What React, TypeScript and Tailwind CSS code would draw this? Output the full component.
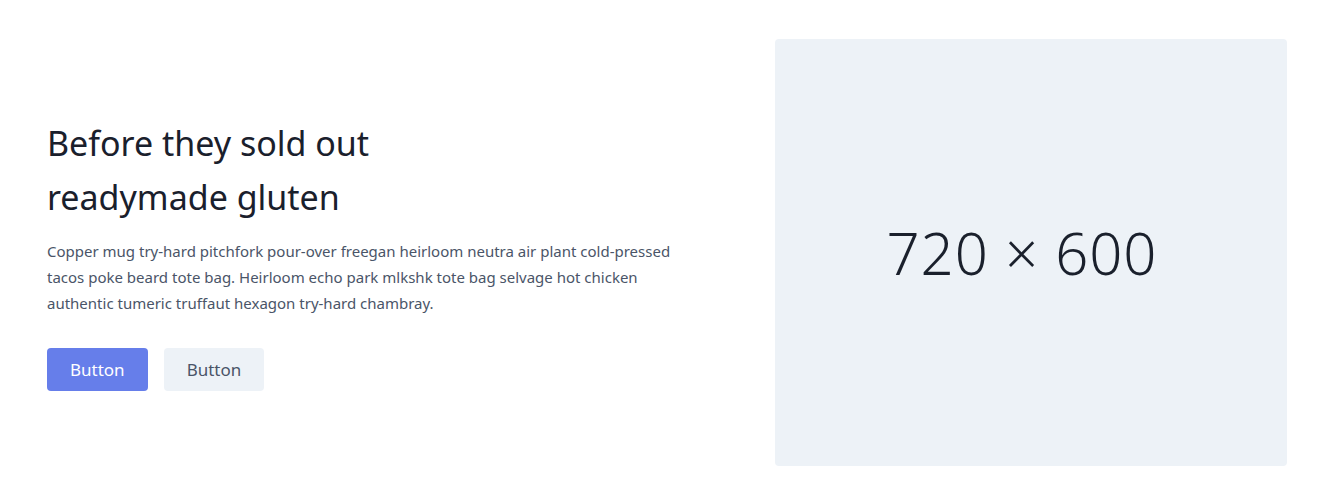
export default function App() {
  return (
    <section
      className="bg-white text-[#4a5568]"
      style={{ fontFamily: '"Noto Sans", "Open Sans", sans-serif' }}
    >
      <div className="flex items-center pl-[47px] pr-[35px] pt-[39px] pb-[34px]">
        <div className="flex-grow flex flex-col items-start text-left pr-24">
          <h1 className="text-[34px] leading-[54px] font-normal text-[#1a202c] mt-[2px] mb-[14px]">
            Before they sold out
            <br />
            readymade gluten
          </h1>
          <p className="text-[15px] leading-[26px] mb-8">
            Copper mug try-hard pitchfork pour-over freegan heirloom neutra air plant cold-pressed
            tacos poke beard tote bag. Heirloom echo park mlkshk tote bag selvage hot chicken
            authentic tumeric truffaut hexagon try-hard chambray.
          </p>
          <div className="flex">
            <button className="inline-flex text-white bg-[#667eea] py-2 px-[23px] rounded text-[17px] leading-[27px]">
              Button
            </button>
            <button className="ml-4 inline-flex text-[#4a5568] bg-[#edf2f7] py-2 px-[23px] rounded text-[17px] leading-[27px]">
              Button
            </button>
          </div>
        </div>
        <div className="w-[512px] shrink-0">
          <div className="w-full h-[427px] rounded bg-[#edf2f7] flex items-center justify-center">
            <span className="text-[58px] font-light text-[#1a202c] tracking-[1px] -translate-x-[9px]">
              720 × 600
            </span>
          </div>
        </div>
      </div>
    </section>
  );
}
